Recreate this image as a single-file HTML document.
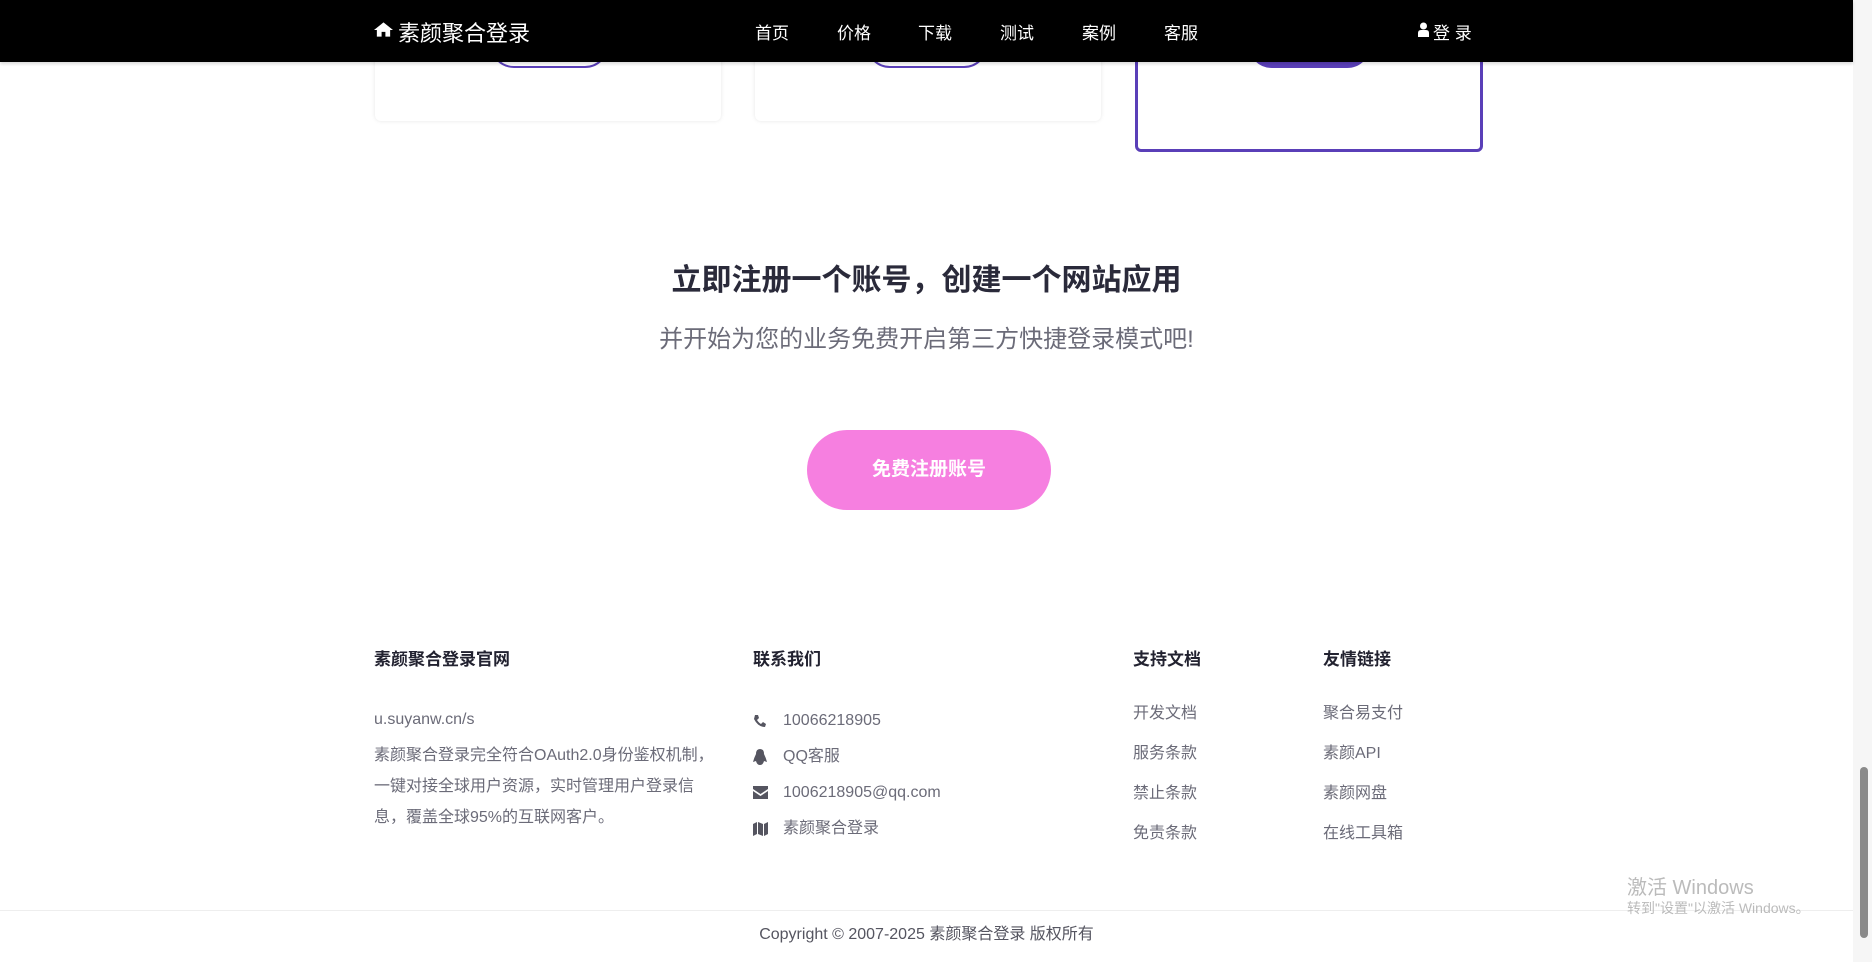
<!DOCTYPE html><html><head><meta charset="utf-8"><style>
*{margin:0;padding:0;box-sizing:border-box}
body{width:1872px;height:962px;overflow:hidden;background:#fff;font-family:"Liberation Sans","Noto Sans CJK SC",sans-serif;position:relative;color:#333}
.a{position:absolute;white-space:nowrap}
.nav{position:absolute;left:0;top:0;width:1853px;height:62px;background:#000;color:#fff;z-index:5;box-shadow:0 2px 3px rgba(0,0,0,.15)}
.nav .a{font-size:17px;top:19px}
.card{position:absolute;top:40px;background:#fff;border-radius:6px;box-shadow:0 0 4px rgba(0,0,0,.1)}
.pill{position:absolute;top:20px;height:48px;border:2px solid #5a3fb8;border-radius:24px}
.fh{font-size:17px;font-weight:bold;color:#222230;top:645px}
.ft{font-size:16px;color:#6b6b78;line-height:20px}
</style></head><body>
<div class="nav">
<svg class="a" style="left:374px;top:21px" width="19" height="17" viewBox="0 0 20 17"><path d="M10 1 L0 9 H3 V16 H8 V11 H12 V16 H17 V9 H20 Z" fill="#fff"/></svg>
<div class="a" style="left:398px;top:16px;font-size:22px">素颜聚合登录</div>
<div class="a" style="left:755px">首页</div><div class="a" style="left:837px">价格</div><div class="a" style="left:918px">下载</div><div class="a" style="left:1000px">测试</div><div class="a" style="left:1082px">案例</div><div class="a" style="left:1164px">客服</div>
<svg class="a" style="left:1418px;top:22px" width="11" height="15" viewBox="0 0 11 15"><circle cx="5.5" cy="4" r="3.5" fill="#fff"/><path d="M0 15 V11 Q0 8 3 8 H8 Q11 8 11 11 V15Z" fill="#fff"/></svg>
<div class="a" style="left:1433px">登 录</div>
</div>
<div class="card" style="left:375px;width:346px;height:81px"></div>
<div class="card" style="left:755px;width:346px;height:81px"></div>
<div class="card" style="left:1135px;width:348px;height:112px;border:3px solid #5a3fb8;box-shadow:none"></div>
<div class="pill" style="left:490px;width:119px"></div>
<div class="pill" style="left:866px;width:122px"></div>
<div class="pill" style="left:1248px;width:123px;background:#5a3fb8"></div>
<div class="a" style="left:0;width:1853px;text-align:center;top:255px;font-size:30px;font-weight:bold;color:#2a2a3a">立即注册一个账号，创建一个网站应用</div>
<div class="a" style="left:0;width:1853px;text-align:center;top:319px;font-size:24px;color:#6b6b78">并开始为您的业务免费开启第三方快捷登录模式吧!</div>
<div class="a" style="left:807px;top:430px;width:244px;height:80px;border-radius:40px;background:#f67fe0;color:#fff;font-size:19px;font-weight:bold;text-align:center;line-height:80px">免费注册账号</div>
<div class="a fh" style="left:374px">素颜聚合登录官网</div>
<div class="a fh" style="left:753px">联系我们</div>
<div class="a fh" style="left:1133px">支持文档</div>
<div class="a fh" style="left:1323px">友情链接</div>
<div class="a ft" style="left:374px;top:710px">u.suyanw.cn/s</div>
<div class="a ft" style="left:374px;top:740px;line-height:31px">素颜聚合登录完全符合OAuth2.0身份鉴权机制，<br>一键对接全球用户资源，实时管理用户登录信<br>息，覆盖全球95%的互联网客户。</div>
<svg class="a" style="left:753px;top:714px" width="13" height="14" viewBox="0 0 13 14"><path d="M2 1 L5 1 L6 4 L4 6 Q6 9 8 10 L10 8 L13 10 L12 13 Q5 13 1 5 Z" fill="#555560"/></svg>
<div class="a ft" style="left:783px;top:711px">10066218905</div>
<svg class="a" style="left:753px;top:749px" width="14" height="16" viewBox="0 0 14 16"><path d="M7 0 Q11 0 11 5 Q13 9 14 13 L11 12 Q10 16 7 16 Q4 16 3 12 L0 13 Q1 9 3 5 Q3 0 7 0Z" fill="#555560"/></svg>
<div class="a ft" style="left:783px;top:747px">QQ客服</div>
<svg class="a" style="left:753px;top:786px" width="15" height="13" viewBox="0 0 15 13"><path d="M0 0 H15 V3 L7.5 8 L0 3Z M0 5 L7.5 10 L15 5 V13 H0Z" fill="#555560"/></svg>
<div class="a ft" style="left:783px;top:783px">1006218905@qq.com</div>
<svg class="a" style="left:753px;top:822px" width="15" height="14" viewBox="0 0 15 14"><path d="M0 2 L4 0 V12 L0 14Z M5 0 L10 2 V14 L5 12Z M11 2 L15 0 V12 L11 14Z" fill="#555560"/></svg>
<div class="a ft" style="left:783px;top:819px">素颜聚合登录</div>
<div class="a ft" style="left:1133px;top:694px;line-height:40px">开发文档<br>服务条款<br>禁止条款<br>免责条款</div>
<div class="a ft" style="left:1323px;top:694px;line-height:40px">聚合易支付<br>素颜API<br>素颜网盘<br>在线工具箱</div>
<div class="a" style="left:0;top:910px;width:1853px;height:1px;background:#eee"></div>
<div class="a ft" style="left:0;width:1853px;text-align:center;top:925px;color:#555560">Copyright © 2007-2025 素颜聚合登录 版权所有</div>
<div class="a" style="left:1627px;top:871px;font-size:20px;color:#bbb">激活 Windows</div>
<div class="a" style="left:1627px;top:898px;font-size:14px;color:#bbb">转到"设置"以激活 Windows。</div>
<div class="a" style="left:1853px;top:0;width:19px;height:962px;background:#f6f6f6"></div>
<div class="a" style="left:1860px;top:767px;width:8px;height:171px;border-radius:4px;background:#8a8a8a"></div>
</body></html>
